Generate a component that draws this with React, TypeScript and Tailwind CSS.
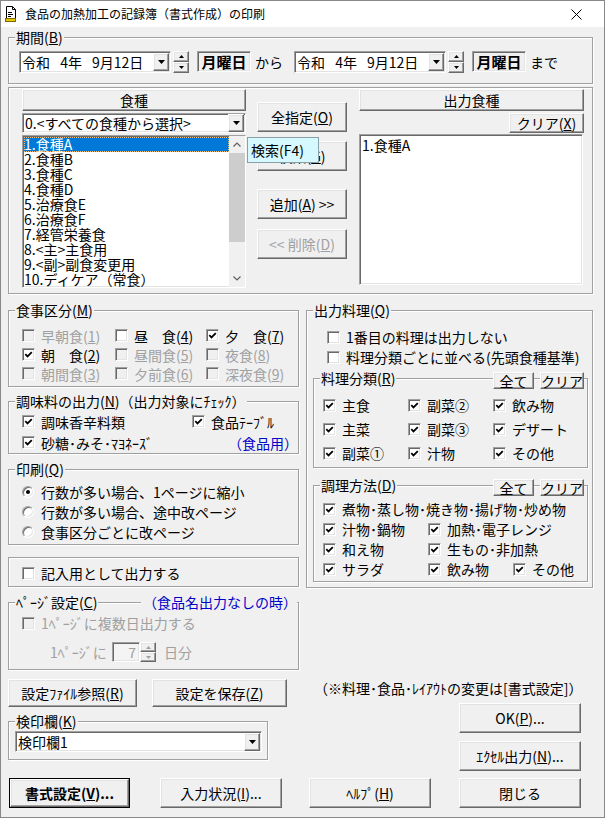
import type { ReactNode } from "react";

const raised =
  "border border-t-white border-l-white border-r-[#696969] border-b-[#696969] shadow-[inset_-1px_-1px_0_#a0a0a0,inset_1px_1px_0_#e3e3e3]";
const sunken =
  "border border-t-[#a0a0a0] border-l-[#a0a0a0] border-r-white border-b-white shadow-[inset_1px_1px_0_#696969,inset_-1px_-1px_0_#e3e3e3]";
const etched = "border border-[#a0a0a0] shadow-[inset_1px_1px_0_#fff,1px_1px_0_#fff]";

function Tri({ up = false, small = false, gray = false }: { up?: boolean; small?: boolean; gray?: boolean }) {
  const w = small ? 5 : 7;
  const h = small ? 3 : 4;
  const pts = up ? `0,${h} ${w},${h} ${w / 2},0` : `0,0 ${w},0 ${w / 2},${h}`;
  return (
    <svg width={w} height={h} viewBox={`0 0 ${w} ${h}`}>
      <polygon points={pts} fill={gray ? "#a0a0a0" : "#000"} />
    </svg>
  );
}

function Btn({ children, className = "", disabled = false }: { children: ReactNode; className?: string; disabled?: boolean }) {
  return (
    <div
      className={`flex items-center justify-center whitespace-nowrap bg-[#f0f0f0] ${raised} ${
        disabled ? "text-[#a0a0a0]" : ""
      } ${className}`}
    >
      {children}
    </div>
  );
}

function Combo({ text, className = "" }: { text: ReactNode; className?: string }) {
  return (
    <div className={`flex items-center bg-white ${sunken} ${className}`}>
      <span className="flex-1 pl-[2px] whitespace-nowrap">{text}</span>
      <div className={`w-[16px] h-[18px] mr-[1px] shrink-0 flex items-center justify-center bg-[#f0f0f0] ${raised}`}>
        <Tri />
      </div>
    </div>
  );
}

function Spin({ className = "", gray = false }: { className?: string; gray?: boolean }) {
  return (
    <div className={`flex flex-col w-[16px] shrink-0 ${className}`}>
      <div className={`flex-1 flex items-center justify-center bg-[#f0f0f0] ${raised}`}>
        <Tri up small gray={gray} />
      </div>
      <div className={`flex-1 flex items-center justify-center bg-[#f0f0f0] ${raised}`}>
        <Tri small gray={gray} />
      </div>
    </div>
  );
}

function Group({
  label,
  extra,
  className = "",
  children,
}: {
  label?: ReactNode;
  extra?: ReactNode;
  className?: string;
  children?: ReactNode;
}) {
  return (
    <div className={`relative ${etched} ${className}`}>
      {label && (
        <div className="absolute left-[6px] top-[-9px] bg-[#f0f0f0] px-[1px] leading-[16px] whitespace-nowrap">
          {label}
        </div>
      )}
      {extra}
      {children}
    </div>
  );
}

function Cb({
  label,
  checked = false,
  disabled = false,
  className = "",
}: {
  label: ReactNode;
  checked?: boolean;
  disabled?: boolean;
  className?: string;
}) {
  return (
    <div className={`flex items-center ${className}`}>
      <span
        className={`w-[13px] h-[13px] shrink-0 flex items-center justify-center ${sunken} ${
          disabled ? "bg-[#f0f0f0]" : "bg-white"
        }`}
      >
        {checked && (
          <svg width="9" height="7" viewBox="0 0 9 7">
            <path d="M1.3 3.2 L3.5 5.4 L7.8 1.1" fill="none" stroke="#000" strokeWidth="1.8" />
          </svg>
        )}
      </span>
      <span className={`ml-[6px] whitespace-nowrap ${disabled ? "text-[#a0a0a0]" : ""}`}>{label}</span>
    </div>
  );
}

function Radio({ label, checked = false }: { label: ReactNode; checked?: boolean }) {
  return (
    <div className="flex items-center h-[20px]">
      <span
        className={`w-[12px] h-[12px] shrink-0 rounded-full bg-white flex items-center justify-center ${sunken}`}
      >
        {checked && <span className="w-[4px] h-[4px] rounded-full bg-black" />}
      </span>
      <span className="ml-[7px] whitespace-nowrap">{label}</span>
    </div>
  );
}

function Chevron({ up = false }: { up?: boolean }) {
  return (
    <svg width="8" height="5" viewBox="0 0 8 5">
      <path d={up ? "M0.5 4.5 L4 1 L7.5 4.5" : "M0.5 0.5 L4 4 L7.5 0.5"} fill="none" stroke="#606060" strokeWidth="1.2" />
    </svg>
  );
}

const foods = [
  "1.食種A",
  "2.食種B",
  "3.食種C",
  "4.食種D",
  "5.治療食E",
  "6.治療食F",
  "7.経管栄養食",
  "8.<主>主食用",
  "9.<副>副食変更用",
  "10.ディケア（常食）",
];

function DateRow() {
  return (
    <>
      <Combo text={"令和\u2002 4年\u2002 9月12日"} className="w-[152px] h-[22px]" />
      <Spin className="ml-[2px] h-[22px]" />
      <div className={`ml-[8px] w-[54px] h-[21px] flex items-center justify-center font-bold text-[15px] ${sunken}`}>
        月曜日
      </div>
    </>
  );
}

export default function App() {
  return (
    <div className="w-[605px] h-[818px] bg-[#f0f0f0] border border-[#888] flex flex-col text-[14px] leading-[16px] text-black font-['Noto_Sans_CJK_JP',sans-serif] overflow-hidden">
      {/* title bar */}
      <div className="h-[26px] bg-white flex items-center shrink-0">
        <svg className="ml-[4px]" width="12" height="16" viewBox="0 0 12 16">
          <path d="M1.5 0.5h6l3 3v9h-9z" fill="#fff" stroke="#000" />
          <path d="M7.5 0.5v3h3" fill="none" stroke="#000" />
          <path d="M3 6.5h4M3 8.5h5M3 10.5h3" stroke="#000" />
          <rect x="0.5" y="12.5" width="10" height="3" fill="#e6c700" stroke="#7d6a00" />
        </svg>
        <span className="ml-[8px] text-[12px] leading-[14px]">食品の加熱加工の記録簿（書式作成）の印刷</span>
        <svg className="ml-auto mr-[22px]" width="11" height="11" viewBox="0 0 11 11">
          <path d="M0.5 0.5 L10.5 10.5 M10.5 0.5 L0.5 10.5" stroke="#000" strokeWidth="1" />
        </svg>
      </div>

      <div className="flex-1 flex flex-col pl-[7px] pr-[11px]">
        {/* 期間 */}
        <Group
          className="mt-[10px] h-[47px] pt-[13px] pl-[10px] flex items-start"
          label={
            <>
              期間(<u>B</u>)
            </>
          }
        >
          <DateRow />
          <span className="ml-[4px] w-[39px] h-[21px] flex items-center">から</span>
          <DateRow />
          <span className="ml-[4px] h-[21px] flex items-center">まで</span>
        </Group>

        {/* 食種 section */}
        <div className={`relative mt-[3px] h-[207px] flex pl-[13px] pt-[1px] ${etched}`}>
          <div className="w-[224px] flex flex-col">
            <div className={`h-[22px] flex items-center justify-center bg-[#f0f0f0] ${raised}`}>食種</div>
            <Combo text="0.<すべての食種から選択>" className="mt-[2px] h-[20px]" />
            <div className={`mt-[2px] h-[153px] flex bg-white ${sunken}`}>
              <div className="flex-1 pt-[1px] pl-[1px] flex flex-col">
                {foods.map((f, i) => (
                  <div
                    key={f}
                    className={`h-[15px] leading-[15px] whitespace-nowrap ${
                      i === 0 ? "bg-[#0078d7] text-white outline-1 outline-dotted outline-[#f0c080] -outline-offset-1" : ""
                    }`}
                  >
                    {f}
                  </div>
                ))}
              </div>
              <div className="w-[16px] flex flex-col bg-[#f0f0f0]">
                <div className="h-[17px] flex items-center justify-center">
                  <Chevron up />
                </div>
                <div className="flex-1 flex flex-col">
                  <div className="h-[89px] bg-[#cdcdcd]" />
                </div>
                <div className="h-[17px] flex items-center justify-center">
                  <Chevron />
                </div>
              </div>
            </div>
          </div>

          <div className="ml-[11px] w-[90px] flex flex-col pt-[13px]">
            <Btn className="h-[30px]">
              全指定(<u>O</u>)
            </Btn>
            <Btn className="mt-[9px] h-[30px]">
              検索(<u>G</u>)
            </Btn>
            <Btn className="mt-[18px] h-[30px]">
              追加(<u>A</u>) &gt;&gt;
            </Btn>
            <Btn className="mt-[10px] h-[30px]" disabled>
              &lt;&lt; 削除(<u>D</u>)
            </Btn>
          </div>

          <div className="ml-[12px] w-[225px] flex flex-col">
            <div className={`h-[22px] flex items-center justify-center bg-[#f0f0f0] ${raised}`}>出力食種</div>
            <Btn className="self-end mt-[2px] w-[75px] h-[20px]">
              クリア(<u>X</u>)
            </Btn>
            <div className={`mt-[1px] h-[151px] w-[224px] bg-white pl-[2px] pt-[2px] ${sunken}`}>1.食種A</div>
          </div>

          {/* tooltip */}
          <div className="absolute left-[238px] top-[49px] w-[72px] h-[26px] bg-[#d6f9ff] border border-[#8aa0a8] flex items-center pl-[3px] whitespace-nowrap">
            検索(F4)
          </div>
        </div>

        {/* two columns */}
        <div className="flex mt-[16px]">
          {/* left column */}
          <div className="w-[291px] flex flex-col">
            <Group
              className="h-[77px] pt-[15px] pl-[13px]"
              label={
                <>
                  食事区分(<u>M</u>)
                </>
              }
            >
              <div className="grid grid-cols-[93px_91px_1fr] auto-rows-[19px]">
                <Cb disabled label={<>早朝食(<u>1</u>)</>} />
                <Cb label={<>昼　食(<u>4</u>)</>} />
                <Cb checked label={<>夕　食(<u>7</u>)</>} />
                <Cb checked label={<>朝　食(<u>2</u>)</>} />
                <Cb disabled label={<>昼間食(<u>5</u>)</>} />
                <Cb disabled label={<>夜食(<u>8</u>)</>} />
                <Cb disabled label={<>朝間食(<u>3</u>)</>} />
                <Cb disabled label={<>夕前食(<u>6</u>)</>} />
                <Cb disabled label={<>深夜食(<u>9</u>)</>} />
              </div>
            </Group>

            <Group
              className="mt-[14px] h-[53px] pt-[9px] pl-[13px]"
              label={
                <>
                  調味料の出力(<u>N</u>)（出力対象にﾁｪｯｸ）
                </>
              }
            >
              <div className="flex h-[21px]">
                <Cb checked label="調味香辛料類" className="w-[170px]" />
                <Cb checked label="食品ﾃｰﾌﾞﾙ" />
              </div>
              <div className="flex h-[21px]">
                <Cb checked label="砂糖･みそ･ﾏﾖﾈｰｽﾞ" />
                <span className="ml-auto self-center text-[#0000c8] whitespace-nowrap">（食品用）</span>
              </div>
            </Group>

            <Group
              className="mt-[15px] h-[76px] pt-[12px] pl-[13px]"
              label={
                <>
                  印刷(<u>Q</u>)
                </>
              }
            >
              <Radio checked label="行数が多い場合、1ページに縮小" />
              <Radio label="行数が多い場合、途中改ページ" />
              <Radio label="食事区分ごとに改ページ" />
            </Group>

            <Group className="mt-[12px] h-[30px] pt-[5px] pl-[13px]">
              <Cb label="記入用として出力する" className="h-[20px]" />
            </Group>

            <Group
              className="mt-[15px] h-[68px] pt-[10px] pl-[13px]"
              label={
                <>
                  ﾍﾟｰｼﾞ設定(<u>C</u>)
                </>
              }
              extra={
                <div className="absolute right-[1px] top-[-9px] bg-[#f0f0f0] pl-[2px] leading-[16px] text-[#0000c8] whitespace-nowrap">
                  （食品名出力なしの時）
                </div>
              }
            >
              <Cb disabled label="1ﾍﾟｰｼﾞに複数日出力する" className="h-[20px]" />
              <div className="mt-[9px] ml-[28px] flex h-[20px] items-center text-[#a0a0a0]">
                <span className="w-[62px] whitespace-nowrap">1ﾍﾟｰｼﾞに</span>
                <div className={`w-[28px] h-[20px] bg-[#f4f4f4] flex items-center justify-end pr-[3px] ${sunken}`}>7</div>
                <Spin gray className="h-[20px]" />
                <span className="ml-[8px]">日分</span>
              </div>
            </Group>

            <div className="mt-[9px] flex">
              <Btn className="w-[129px] h-[28px]">
                設定ﾌｧｲﾙ参照(<u>R</u>)
              </Btn>
              <Btn className="ml-[15px] w-[135px] h-[28px]">
                設定を保存(<u>Z</u>)
              </Btn>
            </div>

            <Group
              className="mt-[14px] w-[260px] h-[39px] pt-[9px] pl-[6px]"
              label={
                <>
                  検印欄(<u>K</u>)
                </>
              }
            >
              <Combo text="検印欄1" className="w-[247px] h-[21px]" />
            </Group>
          </div>

          {/* right column */}
          <div className="ml-[7px] w-[287px] flex flex-col">
            <Group
              className="h-[278px] pt-[16px]"
              label={
                <>
                  出力料理(<u>Q</u>)
                </>
              }
            >
              <Cb label="1番目の料理は出力しない" className="ml-[20px] h-[20px]" />
              <Cb label="料理分類ごとに並べる(先頭食種基準)" className="ml-[20px] h-[20px]" />

              <Group
                className="mt-[11px] ml-[6px] w-[275px] h-[90px] pt-[14px] pl-[9px]"
                label={
                  <>
                    料理分類(<u>R</u>)
                  </>
                }
                extra={
                  <div className="absolute right-[3px] top-[-7px] flex">
                    <Btn className="w-[41px] h-[17px] leading-[14px]">全て</Btn>
                    <Btn className="ml-[6px] w-[44px] h-[17px] leading-[14px]">クリア</Btn>
                  </div>
                }
              >
                <div className="grid grid-cols-[85px_85px_1fr] auto-rows-[24px]">
                  <Cb checked label="主食" />
                  <Cb checked label="副菜②" />
                  <Cb checked label="飲み物" />
                  <Cb checked label="主菜" />
                  <Cb checked label="副菜③" />
                  <Cb checked label="デザート" />
                  <Cb checked label="副菜①" />
                  <Cb checked label="汁物" />
                  <Cb checked label="その他" />
                </div>
              </Group>

              <Group
                className="mt-[17px] ml-[6px] w-[275px] h-[97px] pt-[13px] pl-[9px]"
                label={
                  <>
                    調理方法(<u>D</u>)
                  </>
                }
                extra={
                  <div className="absolute right-[3px] top-[-7px] flex">
                    <Btn className="w-[41px] h-[17px] leading-[14px]">全て</Btn>
                    <Btn className="ml-[6px] w-[44px] h-[17px] leading-[14px]">クリア</Btn>
                  </div>
                }
              >
                <div className="grid grid-cols-[105px_85px_1fr] auto-rows-[20px]">
                  <Cb checked label="煮物･蒸し物･焼き物･揚げ物･炒め物" className="col-span-3" />
                  <Cb checked label="汁物･鍋物" />
                  <Cb checked label="加熱･電子レンジ" className="col-span-2" />
                  <Cb checked label="和え物" />
                  <Cb checked label="生もの･非加熱" className="col-span-2" />
                  <Cb checked label="サラダ" />
                  <Cb checked label="飲み物" />
                  <Cb checked label="その他" />
                </div>
              </Group>
            </Group>

            <div className="mt-[92px] pl-[8px] h-[16px] whitespace-nowrap">（※料理･食品･ﾚｲｱｳﾄの変更は[書式設定]）</div>
            <Btn className="mt-[7px] ml-[153px] w-[122px] h-[30px]">
              OK(<u>P</u>)...
            </Btn>
            <Btn className="mt-[8px] ml-[153px] w-[122px] h-[30px]">
              ｴｸｾﾙ出力(<u>N</u>)...
            </Btn>
          </div>
        </div>

        {/* bottom buttons */}
        <div className="mt-[7px] flex">
          <div className="ml-[1px] w-[121px] h-[30px] border border-black flex">
            <Btn className="flex-1 font-bold">
              書式設定(<u>V</u>)...
            </Btn>
          </div>
          <Btn className="ml-[30px] w-[122px] h-[30px]">
            入力状況(<u>I</u>)...
          </Btn>
          <Btn className="ml-[27px] w-[122px] h-[30px]">
            ﾍﾙﾌﾟ(<u>H</u>)
          </Btn>
          <Btn className="ml-[28px] w-[122px] h-[30px]">閉じる</Btn>
        </div>
      </div>
    </div>
  );
}
